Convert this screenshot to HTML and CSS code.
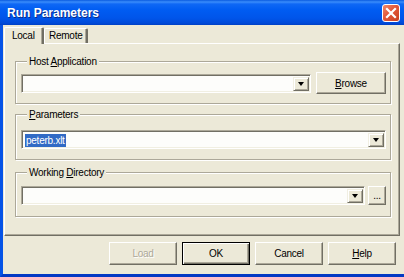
FILE: index.html
```html
<!DOCTYPE html>
<html lang="en">
<head>
    <meta charset="UTF-8">
    <title>Run Parameters</title>
    <link rel="stylesheet" href="styles.css">
</head>
<body>
    <div class="titlebar">
        <span class="title">Run Parameters</span>
        <button class="close" title="Close">
            <svg width="12" height="12" viewBox="0 0 12 12">
                <path d="M2 2 L10 10 M10 2 L2 10" stroke="#fff" stroke-width="2.2" stroke-linecap="square"/>
            </svg>
        </button>
    </div>

    <div class="frame">
        <div class="tabs">
            <div class="tab active">Local</div>
            <div class="tab">Remote</div>
        </div>

        <div class="panel">
            <fieldset class="group host">
                <legend>Host <u>A</u>pplication</legend>
                <div class="row">
                    <div class="combo grow">
                        <span class="value"></span>
                        <span class="drop"><i></i></span>
                    </div>
                    <button class="btn browse"><u>B</u>rowse</button>
                </div>
            </fieldset>

            <fieldset class="group params">
                <legend><u>P</u>arameters</legend>
                <div class="row">
                    <div class="combo grow">
                        <span class="value"><span class="selected">peterb.xlt</span></span>
                        <span class="drop"><i></i></span>
                    </div>
                </div>
            </fieldset>

            <fieldset class="group workdir">
                <legend>Working <u>D</u>irectory</legend>
                <div class="row tight">
                    <div class="combo grow">
                        <span class="value"></span>
                        <span class="drop"><i></i></span>
                    </div>
                    <button class="btn dots">...</button>
                </div>
            </fieldset>
        </div>

        <div class="actions">
            <button class="btn action" disabled>Load</button>
            <button class="btn action default">OK</button>
            <button class="btn action">Cancel</button>
            <button class="btn action"><u>H</u>elp</button>
        </div>
    </div>
</body>
</html>
```

FILE: styles.css
```css
body {
    margin: 0;
    width: 404px;
    height: 277px;
    overflow: hidden;
    background: #ece9d8;
    font-family: 'Liberation Sans', Arial, sans-serif;
    font-size: 10px;
    letter-spacing: -0.25px;
    color: #000;
}

u {
    text-decoration: underline;
    text-underline-offset: 1px;
}

/* title bar */
.titlebar {
    height: 25px;
    display: flex;
    align-items: center;
    justify-content: space-between;
    padding: 0 4px 0 7px;
    box-sizing: border-box;
    background: linear-gradient(#0a5be0 0px, #3a8dfb 2px, #0f68f5 4px, #005cf2 10px, #0055ea 18px, #004ad9 23px, #0040c4 25px);
}

.title {
    color: #fff;
    font-weight: bold;
    font-size: 12px;
    letter-spacing: 0;
    text-shadow: 1px 1px 0 #0a2c8a;
}

.close {
    width: 18px;
    height: 18px;
    padding: 0;
    margin-top: 1px;
    display: flex;
    align-items: center;
    justify-content: center;
    border: 1px solid #fff;
    border-radius: 3px;
    background: linear-gradient(135deg, #f08a6c 0%, #e2583a 45%, #c8401f 100%);
}

/* window body */
.frame {
    height: 252px;
    box-sizing: border-box;
    border-left: 3px solid #0553e6;
    border-bottom: 3px solid #0339c4;
    display: flex;
    flex-direction: column;
}

.tabs {
    height: 18px;
    display: flex;
    align-items: flex-end;
    padding-left: 1px;
}

.tab {
    height: 15px;
    width: 44px;
    padding-left: 4px;
    box-sizing: border-box;
    line-height: 13px;
    border-top: 1px solid #fff;
    border-left: 1px solid #fff;
    border-right: 2px solid #716f64;
    box-shadow: inset -1px 0 0 #aca899;
    border-radius: 2px 2px 0 0;
}

.tab.active {
    height: 17px;
    width: 40px;
    padding-left: 7px;
    line-height: 15px;
    position: relative;
    margin-bottom: -1px;
    background: #ece9d8;
    z-index: 1;
}

.panel {
    flex: 0 0 193px;
    box-sizing: border-box;
    margin: 0 4px 0 1px;
    border-top: 1px solid #fff;
    border-left: 1px solid #fff;
    border-right: 1px solid #716f64;
    border-bottom: 1px solid #716f64;
    box-shadow: inset -1px -1px 0 #aca899;
    padding: 0 8px 0 10px;
}

/* etched group boxes */
.group {
    padding: 4px 4px 9px 5px;
    border: 1px solid #aca899;
    box-shadow: inset 1px 1px 0 #fff, 1px 1px 0 #fff;
    min-width: 0;
}

.group.host {
    margin: 11px 0 0;
}

.group.params {
    margin: 4px 0 0;
    padding-top: 9px;
    padding-bottom: 10px;
}

.group.workdir {
    margin: 6px 0 0;
    padding-top: 7px;
    padding-bottom: 11px;
}

.group legend {
    padding: 0 2px;
    margin-left: 6px;
    line-height: 13px;
    background: #ece9d8;
}

.row {
    display: flex;
    align-items: center;
    gap: 5px;
}

.row.tight {
    gap: 3px;
}

.grow {
    flex: 1;
}

/* sunken combo box */
.combo {
    height: 19px;
    box-sizing: border-box;
    display: flex;
    align-items: stretch;
    background: #fdfdfb;
    border-top: 1px solid #aca899;
    border-left: 1px solid #aca899;
    border-right: 1px solid #fff;
    border-bottom: 1px solid #fff;
    box-shadow: inset 1px 1px 0 #716f64, inset -1px -1px 0 #f1efe2;
    padding: 2px 1px 1px 2px;
}

.value {
    flex: 1;
    display: flex;
    align-items: center;
    padding-left: 1px;
}

.selected {
    background: #316ac5;
    color: #fff;
    line-height: 13px;
    padding: 0 1px;
}

.drop {
    width: 16px;
    display: flex;
    align-items: center;
    justify-content: center;
    box-sizing: border-box;
    background: #ece9d8;
    border-top: 1px solid #f1efe2;
    border-left: 1px solid #f1efe2;
    border-right: 1px solid #716f64;
    border-bottom: 1px solid #716f64;
    box-shadow: inset 1px 1px 0 #fff, inset -1px -1px 0 #aca899;
}

.drop i {
    width: 0;
    height: 0;
    border-left: 3.5px solid transparent;
    border-right: 3.5px solid transparent;
    border-top: 4px solid #000;
}

/* raised buttons */
.btn {
    font: inherit;
    letter-spacing: inherit;
    color: #000;
    padding: 0;
    background: #ece9d8;
    box-sizing: border-box;
    border-top: 1px solid #fff;
    border-left: 1px solid #fff;
    border-right: 1px solid #716f64;
    border-bottom: 1px solid #716f64;
    box-shadow: inset -1px -1px 0 #aca899;
}

.browse {
    width: 70px;
    height: 22px;
}

.dots {
    width: 18px;
    height: 19px;
    line-height: 12px;
}

.actions {
    flex: 1;
    display: flex;
    justify-content: flex-end;
    gap: 5px;
    padding: 6px 8px 0 0;
}

.action {
    width: 68px;
    height: 23px;
}

.action:disabled {
    color: #aca899;
    text-shadow: 1px 1px 0 #fff;
}

.action.default {
    border: 1px solid #000;
    box-shadow: inset 1px 1px 0 #fff, inset -1px -1px 0 #716f64, inset -2px -2px 0 #aca899;
}
```
